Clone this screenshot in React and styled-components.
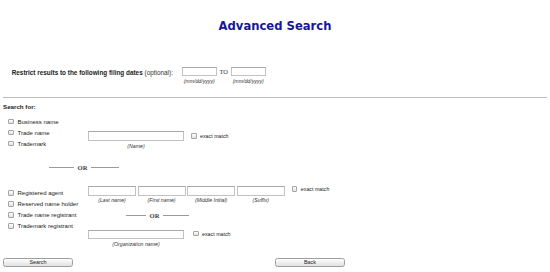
import styled, { createGlobalStyle } from "styled-components";

const GlobalStyle = createGlobalStyle`
  html, body { margin: 0; padding: 0; background: #fff; }
  body { font-family: "Liberation Sans", Arial, sans-serif; color: #222; }
`;

const Page = styled.div`
  width: 550px;
  height: 272px;
  box-sizing: border-box;
  padding: 0 3px;
  overflow: hidden;
`;

const Title = styled.h1`
  margin: 0;
  padding-top: 20px;
  font-family: "DejaVu Sans", Verdana, sans-serif;
  font-size: 11.6px;
  line-height: 13px;
  font-weight: bold;
  color: #16169a;
  text-align: center;
`;

const RestrictRow = styled.div`
  display: flex;
  align-items: flex-start;
  margin-top: 34px;
  padding-left: 8.7px;
`;

const RestrictLabel = styled.div`
  width: 170px;
  font-size: 6.4px;
  line-height: 8px;
  margin-top: 2px;
  b { font-weight: bold; }
  span { color: #333; }
`;

const FieldCol = styled.div`
  display: flex;
  flex-direction: column;
  align-items: center;
`;

const TextBox = styled.div`
  box-sizing: border-box;
  width: ${(p) => p.$w}px;
  height: ${(p) => p.$h || 9}px;
  border: 1px solid #c2c2c2;
  border-top-color: #a8a8a8;
  background: #fff;
`;

const Caption = styled.div`
  font-size: 5.2px;
  line-height: 6px;
  font-style: italic;
  color: #333;
  margin-top: ${(p) => p.$mt || 1.5}px;
  white-space: nowrap;
`;

const To = styled.div`
  width: 14px;
  text-align: center;
  font-family: "Liberation Serif", "Times New Roman", serif;
  font-size: 6.4px;
  line-height: 9px;
  color: #333;
`;

const Rule = styled.div`
  height: 1px;
  background: #bdbdbd;
  margin-top: 13px;
`;

const SectionHead = styled.div`
  font-size: 6.2px;
  line-height: 8px;
  font-weight: bold;
  margin-top: 5px;
`;

const Group = styled.div`
  display: flex;
  align-items: flex-start;
  margin-top: ${(p) => p.$mt}px;
`;

const CheckList = styled.div`
  width: 85px;
  display: flex;
  flex-direction: column;
  margin-top: ${(p) => p.$mt || 0}px;
`;

const CheckRow = styled.label`
  display: flex;
  align-items: center;
  height: 11px;
  padding-left: 5px;
  gap: 4px;
  font-size: 6px;
  white-space: nowrap;
`;

const Box = styled.span`
  display: inline-block;
  box-sizing: border-box;
  width: 5.5px;
  height: 5.5px;
  border: 1px solid #a4a4a4;
  border-radius: 1px;
  background: linear-gradient(#ffffff, #e2e2e2);
  flex-shrink: 0;
`;

const FieldArea = styled.div`
  display: flex;
  flex-direction: column;
  margin-top: ${(p) => p.$mt || 0}px;
`;

const InputLine = styled.div`
  display: flex;
  align-items: flex-start;
  margin-top: ${(p) => p.$mt || 0}px;
`;

const InputRow = styled.div`
  display: flex;
  gap: 1.6px;
`;

const Exact = styled.label`
  display: flex;
  align-items: center;
  gap: 3.5px;
  margin-left: ${(p) => p.$ml}px;
  margin-top: ${(p) => p.$mt || 0}px;
  font-size: 5.3px;
  line-height: 6px;
  white-space: nowrap;
`;

const OrRow = styled.div`
  display: flex;
  align-items: center;
  height: 8px;
  margin-top: ${(p) => p.$mt}px;
  padding-left: ${(p) => p.$pl}px;
`;

const OrLine = styled.span`
  width: ${(p) => p.$w}px;
  height: 1px;
  background: #9a9a9a;
`;

const OrText = styled.span`
  font-family: "Liberation Serif", "Times New Roman", serif;
  font-size: 6.6px;
  font-weight: bold;
  color: #444;
  margin: 0 ${(p) => p.$gap}px;
`;

const ButtonRow = styled.div`
  display: flex;
  gap: 202px;
  margin-top: 11.5px;
`;

const Button = styled.button`
  box-sizing: border-box;
  width: 70px;
  height: 9px;
  padding: 0;
  border: 1px solid #9e9e9e;
  border-radius: 2.5px;
  background: linear-gradient(#ffffff, #ececec 60%, #e2e2e2);
  font-family: "Liberation Sans", Arial, sans-serif;
  font-size: 5.4px;
  line-height: 7px;
  color: #222;
`;

const Or = ({ mt, pl, left, right, gap }) => (
  <OrRow $mt={mt} $pl={pl}>
    <OrLine $w={left} />
    <OrText $gap={gap}>OR</OrText>
    <OrLine $w={right} />
  </OrRow>
);

const App = () => {
  const names = ["(Last name)", "(First name)", "(Middle Initial)", "(Suffix)"];
  return (
    <>
      <GlobalStyle />
      <Page>
        <Title>Advanced Search</Title>

        <RestrictRow>
          <RestrictLabel>
            <b>Restrict results to the following filing dates</b> <span>(optional):</span>
          </RestrictLabel>
          <FieldCol>
            <TextBox $w={35} />
            <Caption $mt={2}>(mm/dd/yyyy)</Caption>
          </FieldCol>
          <To>TO</To>
          <FieldCol>
            <TextBox $w={35} />
            <Caption $mt={2}>(mm/dd/yyyy)</Caption>
          </FieldCol>
        </RestrictRow>

        <Rule />
        <SectionHead>Search for:</SectionHead>

        <Group $mt={5}>
          <CheckList>
            <CheckRow><Box />Business name</CheckRow>
            <CheckRow><Box />Trade name</CheckRow>
            <CheckRow><Box />Trademark</CheckRow>
          </CheckList>
          <FieldArea $mt={15}>
            <InputLine>
              <FieldCol>
                <TextBox $w={96} $h={10} />
                <Caption>(Name)</Caption>
              </FieldCol>
              <Exact $ml={7} $mt={2}><Box />exact match</Exact>
            </InputLine>
          </FieldArea>
        </Group>

        <Or mt={14} pl={46} left={25} right={28} gap={3.5} />

        <Group $mt={15}>
          <CheckList $mt={1.5}>
            <CheckRow><Box />Registered agent</CheckRow>
            <CheckRow><Box />Reserved name holder</CheckRow>
            <CheckRow><Box />Trade name registrant</CheckRow>
            <CheckRow><Box />Trademark registrant</CheckRow>
          </CheckList>
          <FieldArea>
            <InputLine>
              <InputRow>
                {names.map((n) => (
                  <FieldCol key={n}>
                    <TextBox $w={48} $h={9.5} />
                    <Caption>{n}</Caption>
                  </FieldCol>
                ))}
              </InputRow>
              <Exact $ml={7} $mt={0}><Box />exact match</Exact>
            </InputLine>
            <Or mt={8.5} pl={38} left={20} right={26} gap={3.5} />
            <InputLine $mt={10}>
              <FieldCol>
                <TextBox $w={96} $h={9.5} />
                <Caption>(Organization name)</Caption>
              </FieldCol>
              <Exact $ml={9} $mt={1}><Box />exact match</Exact>
            </InputLine>
          </FieldArea>
        </Group>

        <ButtonRow>
          <Button>Search</Button>
          <Button>Back</Button>
        </ButtonRow>
      </Page>
    </>
  );
};

export default App;
